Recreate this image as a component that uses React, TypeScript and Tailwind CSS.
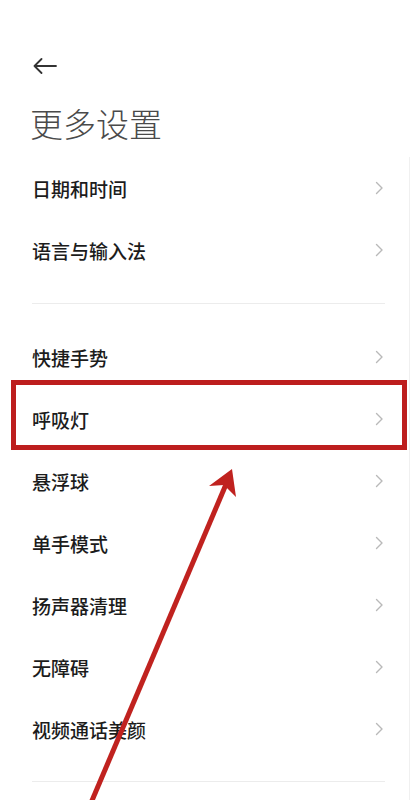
import React from "react";

const groupOne = ["日期和时间", "语言与输入法"];
const groupTwo = ["快捷手势", "呼吸灯", "悬浮球", "单手模式", "扬声器清理", "无障碍", "视频通话美颜"];

function Chevron() {
  return (
    <svg width="9" height="14" viewBox="0 0 9 14" fill="none" className="shrink-0">
      <path d="M1.5 1.5 L7 7 L1.5 12.5" stroke="#b9b9b9" strokeWidth="1.4" strokeLinecap="round" strokeLinejoin="round" />
    </svg>
  );
}

function Row({ label }: { label: string }) {
  return (
    <div className="flex h-[62px] items-center justify-between pl-[32px] pr-[25px]">
      <span className="text-[19px] font-medium leading-none text-[#1c1c1c]">{label}</span>
      <Chevron />
    </div>
  );
}

export default function App() {
  return (
    <div
      className="relative h-[800px] w-full overflow-hidden bg-white"
      style={{ fontFamily: '"Noto Sans CJK SC", "Noto Sans", sans-serif' }}
    >
      {/* Header */}
      <div className="pl-[33px] pt-[58px]">
        <svg width="24" height="16" viewBox="0 0 24 16" fill="none">
          <path d="M23 8 H1.5 M8.5 1 L1.5 8 L8.5 15" stroke="#333" strokeWidth="1.8" strokeLinecap="round" strokeLinejoin="round" />
        </svg>
      </div>
      <h1 className="mt-[27px] pl-[30px] text-[33px] font-light leading-[44px] text-[#4a4a4a]">更多设置</h1>

      {/* List */}
      <div className="mt-[12px] w-[410px] border-r border-[#f0f0f0] pb-[40px]">
        {groupOne.map((l) => (
          <Row key={l} label={l} />
        ))}
        <div className="mx-[32px] my-[22px] h-px w-[353px] bg-[#ececec]" />
        {groupTwo.map((l) => (
          <Row key={l} label={l} />
        ))}
        <div className="mx-[32px] mt-[21px] h-px w-[353px] bg-[#ececec]" />
      </div>

      {/* Annotation: highlight box */}
      <div className="absolute left-[11px] top-[380px] h-[70px] w-[396px] border-[5px] border-[#bd1e1e]" />

      {/* Annotation: arrow */}
      <svg className="absolute left-0 top-0" width="416" height="800" viewBox="0 0 416 800" fill="none">
        <line x1="88" y1="810" x2="227" y2="482" stroke="#c0221f" strokeWidth="5" />
        <polygon points="232,469 209,486 224,485 236,497" fill="#c0221f" />
      </svg>
    </div>
  );
}
